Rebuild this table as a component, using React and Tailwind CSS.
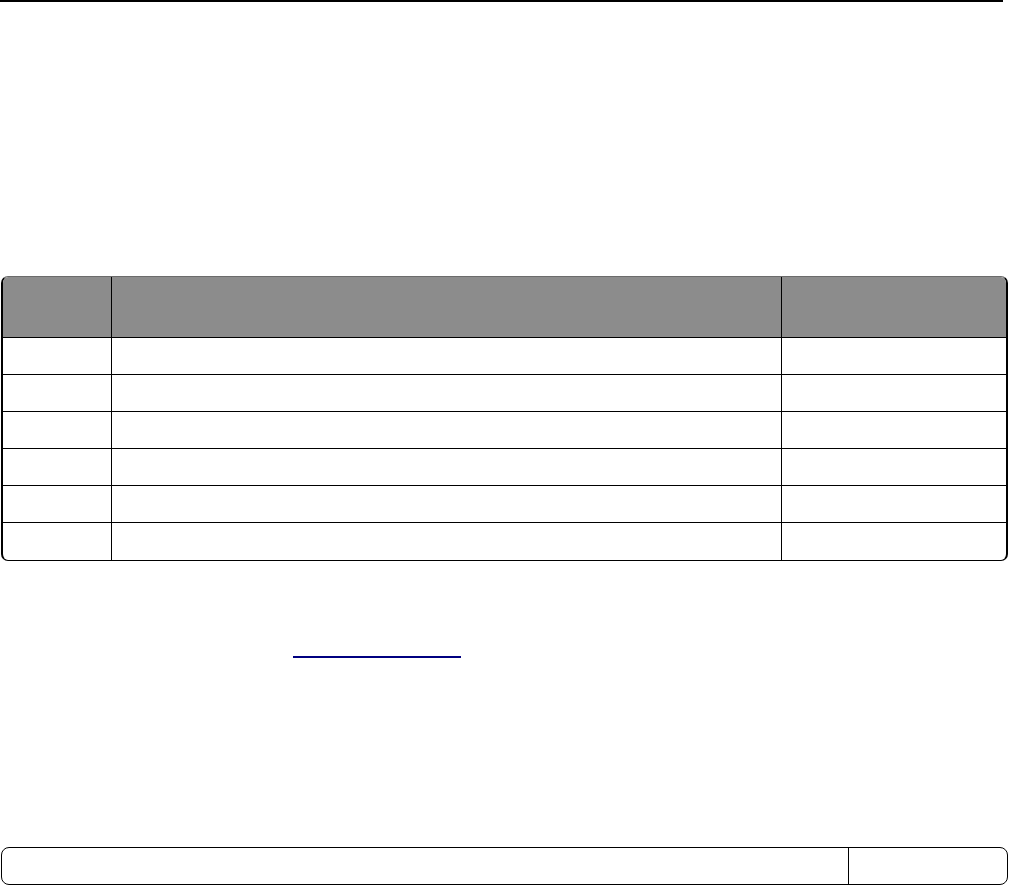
import React from 'react';

const rows = [0, 1, 2, 3, 4, 5];

const App = () => {
  return (
    <div className="bg-white min-h-[886px] w-[1010px] font-['Liberation_Sans',sans-serif]">
      {/* top rule */}
      <div className="h-[2px] w-[1003px] bg-black" />

      {/* table */}
      <div className="mt-[274px] ml-[1px] w-[1007px] rounded-[7px] border-x-2 border-b border-black border-t border-t-[#6b6b6b] overflow-hidden">
        <div className="grid grid-cols-[109px_670px_1fr] h-[61px] bg-[#8c8c8c] border-b border-black">
          <div className="border-r border-black" />
          <div className="border-r border-black" />
          <div />
        </div>
        {rows.map((r) => (
          <div
            key={r}
            className={`grid grid-cols-[109px_670px_1fr] h-[37px] ${r < rows.length - 1 ? 'border-b border-black' : ''}`}
          >
            <div className="border-r border-black" />
            <div className="border-r border-black" />
            <div />
          </div>
        ))}
      </div>

      {/* link underline */}
      <div className="mt-[95px] ml-[293px] w-[168px] h-[2px] bg-[#000080]" />

      {/* bottom box */}
      <div className="mt-[189px] ml-[1px] w-[1007px] h-[38px] rounded-[8px] border border-black grid grid-cols-[847px_1fr]">
        <div className="border-r border-black" />
        <div />
      </div>
    </div>
  );
};

export default App;
